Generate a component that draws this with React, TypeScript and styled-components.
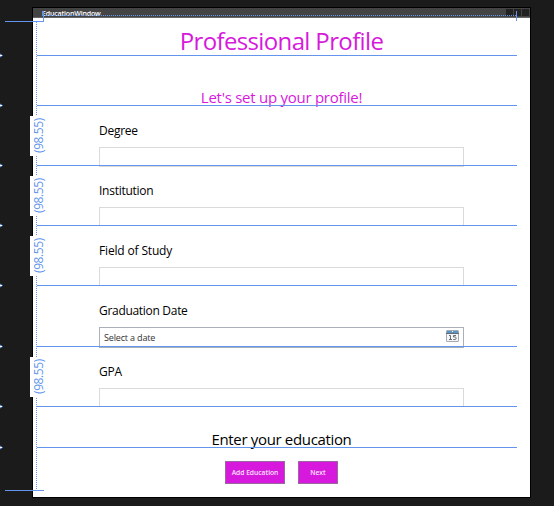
import React from 'react';
import styled, { createGlobalStyle } from 'styled-components';

const GUIDE = '#6495ed';
const MAGENTA = '#d619dc';

const GlobalStyle = createGlobalStyle`
  * { box-sizing: border-box; }
  body { margin: 0; background: #1b1b1b; overflow: hidden; font-family: 'Open Sans', 'Noto Sans', sans-serif; }
`;

const Canvas = styled.div`
  position: relative;
  width: 554px;
  height: 506px;
  padding: 7px 0 0 32px;
  background: #1b1b1b;
`;

const DesignWindow = styled.div`
  width: 499px;
  height: 491px;
  border: 1px solid #000;
  background: #fff;
`;

const TitleBar = styled.header`
  display: flex;
  justify-content: space-between;
  align-items: center;
  height: 10px;
  padding: 0 1px 0 9px;
  background: #444;
  border-bottom: 1px solid #666;
`;

const WindowTitle = styled.span`
  padding-top: 1px;
  color: #fff;
  font-size: 7px;
  line-height: 9px;
  font-weight: 600;
  letter-spacing: -0.16px;
`;

const Controls = styled.div`
  display: flex;
  gap: 1px;
`;

const ControlBox = styled.i`
  width: 7px;
  height: 7px;
  background: #222;
`;

const Row = styled.section<{ $height: number; $line?: boolean }>`
  position: relative;
  height: ${p => p.$height}px;
  &::after {
    content: '';
    display: ${p => (p.$line === false ? 'none' : 'block')};
    position: absolute;
    left: 4px;
    right: 13px;
    bottom: 0;
    height: 1px;
    background: ${GUIDE};
  }
`;

const Heading = styled.h1<{ $size: number; $top: number; $spacing: number; $color: string }>`
  margin: 0;
  padding-top: ${p => p.$top}px;
  text-align: center;
  font-weight: 400;
  font-size: ${p => p.$size}px;
  line-height: 1.33;
  letter-spacing: ${p => p.$spacing}px;
  color: ${p => p.$color};
  white-space: nowrap;
`;

const Field = styled(Row)`
  padding: 17px 66px 0;
`;

const Label = styled.label<{ $spacing?: number }>`
  display: block;
  height: 24px;
  font-size: 12px;
  line-height: 16px;
  letter-spacing: ${p => p.$spacing ?? -0.26}px;
  color: #000;
`;

const TextInput = styled.div<{ $tall?: boolean }>`
  height: ${p => (p.$tall ? 20 : 19)}px;
  border: 1px solid #dadada;
  background: #fff;
`;

const DateInput = styled.div`
  display: flex;
  align-items: center;
  justify-content: space-between;
  height: 21px;
  padding: 0 4px;
  border: 1px solid #a9b0b9;
  font-size: 9px;
  letter-spacing: -0.16px;
  color: #333;
`;

const Calendar = styled.svg`
  margin-bottom: 2px;
`;

const Buttons = styled.div`
  display: flex;
  justify-content: center;
  gap: 13px;
  padding-top: 13px;
`;

const Button = styled.button<{ $width: number }>`
  width: ${p => p.$width}px;
  height: 23px;
  padding: 0;
  border: 1px solid #9a68a0;
  background: ${MAGENTA};
  color: #fbe3fc;
  font: 600 6.7px/21px 'Open Sans', sans-serif;
`;

const Adorners = styled.div`
  position: absolute;
  inset: 0;
  overflow: hidden;
  pointer-events: none;
`;

const Guide = styled.i<{ $x: number; $y: number; $w: number; $h: number; $dotted?: 'right' | 'bottom' }>`
  position: absolute;
  left: ${p => p.$x}px;
  top: ${p => p.$y}px;
  width: ${p => p.$w}px;
  height: ${p => p.$h}px;
  background: ${p => (p.$dotted ? `repeating-linear-gradient(to ${p.$dotted}, ${GUIDE} 0 1px, transparent 1px 2px)` : GUIDE)};
`;

const Size = styled.span<{ $y: number }>`
  position: absolute;
  left: 30px;
  top: ${p => p.$y}px;
  width: 16px;
  height: 40px;
  padding-right: 2px;
  writing-mode: vertical-rl;
  transform: rotate(180deg);
  background: #fff;
  color: ${GUIDE};
  font-size: 12px;
  line-height: 14px;
  letter-spacing: -0.4px;
  text-align: center;
`;

const Marker = styled.svg<{ $y: number }>`
  position: absolute;
  left: 0;
  top: ${p => p.$y}px;
`;

const CalendarIcon = () => (
  <Calendar width="13" height="13" viewBox="0 0 13 13">
    <rect x="0.5" y="0.5" width="12" height="11" rx="0.5" fill="#f4f5f7" stroke="#a5aab0" />
    <path d="M1 1h11v2H1z" fill="#5a94c4" />
    <path d="M6 1h1v1H6z" fill="#fff" />
    <path d="M0 3h13v1H0z" fill="#626b75" />
    <path d="M3 5.5h1.5V9.5M3 9.5h3M10 5.5H7.5v1.5h1.8q.8.1.8 1.2t-.8 1.3H7.3" fill="none" stroke="#666c74" strokeWidth="1" />
  </Calendar>
);

const MARKERS = [55, 105, 165, 225, 285, 346, 406, 447];

export default function App() {
  return (
    <>
      <GlobalStyle />
      <Canvas>
        <DesignWindow>
          <TitleBar>
            <WindowTitle>EducationWindow</WindowTitle>
            <Controls><ControlBox /><ControlBox /><ControlBox /></Controls>
          </TitleBar>
          <Row $height={38}><Heading $size={24} $top={7} $spacing={-0.64} $color={MAGENTA}>Professional Profile</Heading></Row>
          <Row $height={50}><Heading as="h2" $size={15} $top={32} $spacing={-0.26} $color={MAGENTA}>Let's set up your profile!</Heading></Row>
          <Field $height={60}><Label>Degree</Label><TextInput $tall /></Field>
          <Field $height={60}><Label>Institution</Label><TextInput /></Field>
          <Field $height={60}><Label $spacing={-0.16}>Field of Study</Label><TextInput /></Field>
          <Field $height={61}>
            <Label $spacing={-0.3}>Graduation Date</Label>
            <DateInput><span>Select a date</span><CalendarIcon /></DateInput>
          </Field>
          <Field $height={60}><Label>GPA</Label><TextInput /></Field>
          <Row $height={41}><Heading as="h2" $size={15} $top={23} $spacing={-0.34} $color="#000">Enter your education</Heading></Row>
          <Row $height={49} $line={false}>
            <Buttons><Button $width={60}>Add Education</Button><Button $width={40}>Next</Button></Buttons>
          </Row>
        </DesignWindow>
        <Adorners>
          <Guide $x={43} $y={15} $w={473} $h={1} $dotted="right" />
          <Guide $x={5} $y={21} $w={39} $h={1} />
          <Guide $x={43} $y={11} $w={1} $h={10} />
          <Guide $x={516} $y={11} $w={1} $h={10} />
          <Guide $x={36} $y={22} $w={1} $h={468} $dotted="bottom" />
          <Guide $x={5} $y={490} $w={39} $h={1} />
          {[116, 176, 236, 357].map(y => <Size key={y} $y={y}>(98.55)</Size>)}
          {MARKERS.map(y => (
            <Marker key={y} $y={y - 2} width="4" height="5" viewBox="0 0 4 5">
              <path d="M0 0.5L3 2.5L0 4.5z" fill={GUIDE} />
              <path d="M0 2h2v1H0z" fill="#fff" />
            </Marker>
          ))}
        </Adorners>
      </Canvas>
    </>
  );
}
